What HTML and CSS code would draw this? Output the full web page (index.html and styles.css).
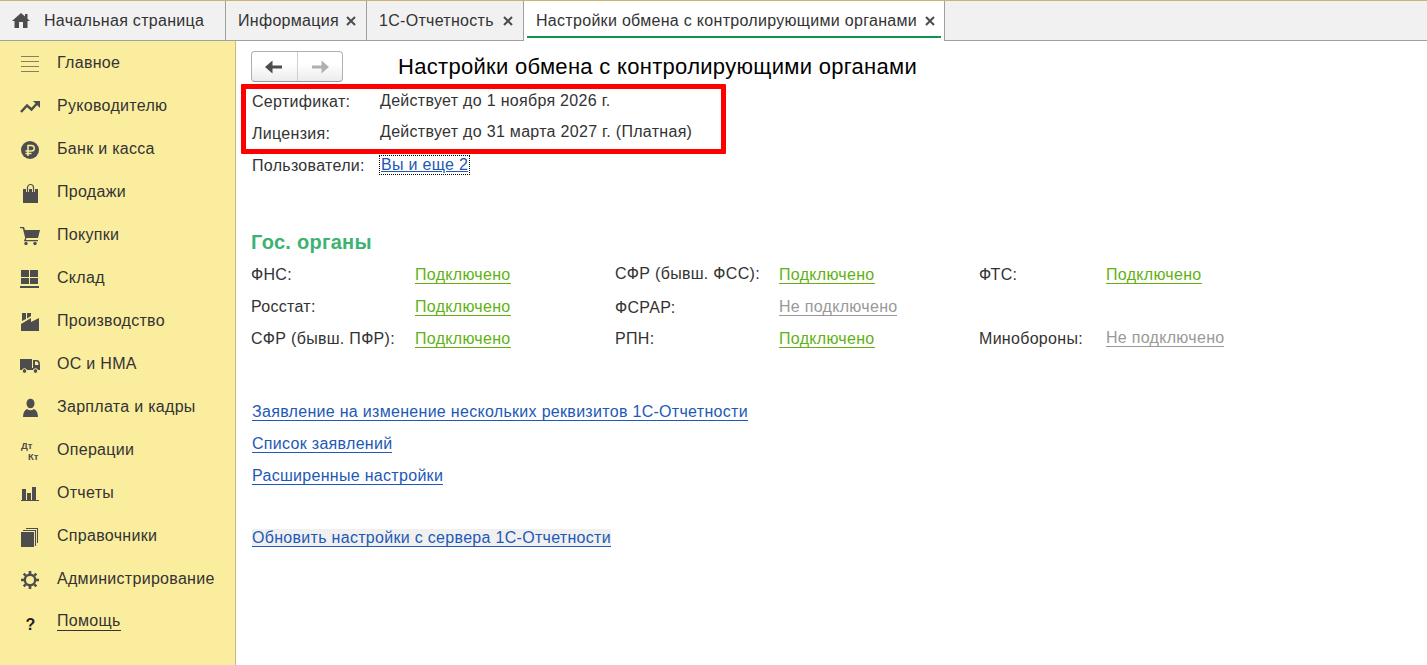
FILE: index.html
```html
<!DOCTYPE html>
<html lang="ru">
<head>
    <meta charset="UTF-8">
    <meta name="viewport" content="width=device-width, initial-scale=1.0">
    <title>Настройки обмена с контролирующими органами</title>
    <link rel="stylesheet" href="styles.css">
</head>
<body>
    <div class="tabs">
        <div class="tab home">
            <svg width="18" height="15" viewBox="0 0 18 15"><path d="M9 0 0 8h2.5v7H7V9h4v6h4.500V8H18l-2.500-2.300V1H13v2.500z" fill="#4d4d4d"/></svg>
            <span>Начальная страница</span>
        </div>
        <div class="tab info">
            <span>Информация</span>
            <svg class="close" width="10" height="10" viewBox="0 0 10 10"><path d="M1 1l8 8M9 1l-8 8"/></svg>
        </div>
        <div class="tab report">
            <span>1С-Отчетность</span>
            <svg class="close" width="10" height="10" viewBox="0 0 10 10"><path d="M1 1l8 8M9 1l-8 8"/></svg>
        </div>
        <div class="tab current">
            <span>Настройки обмена с контролирующими органами</span>
            <svg class="close" width="10" height="10" viewBox="0 0 10 10"><path d="M1 1l8 8M9 1l-8 8"/></svg>
        </div>
    </div>
    <div class="container">
        <div class="sidebar">
            <div class="item">
                <svg class="icon" viewBox="0 0 20 20"><path d="M1 2.500h18M1 7.500h18M1 12.500h18M1 17.500h18" stroke="#85805f" stroke-width="1.200"/></svg>
                <span>Главное</span>
            </div>
            <div class="item">
                <svg class="icon" viewBox="0 0 20 20"><path d="M1 15l6-6.500 4.500 4L17 6.500" fill="none" stroke="#4d4d4d" stroke-width="2.500"/><path d="M13 4h7v7z" fill="#4d4d4d"/></svg>
                <span>Руководителю</span>
            </div>
            <div class="item">
                <svg class="icon" viewBox="0 0 20 20"><circle cx="10" cy="10" r="9" fill="#4d4d4d"/><path d="M8 16V5.500h3.500a2.700 2.700 0 0 1 0 5.500H5.500M5.500 13.500h6" fill="none" stroke="#fbed9e" stroke-width="1.500"/></svg>
                <span>Банк и касса</span>
            </div>
            <div class="item">
                <svg class="icon" viewBox="0 0 20 20"><path d="M3 6h15v14H3z" fill="#4d4d4d"/><path d="M7.500 9V4.500a3 3 0 0 1 6 0V9" fill="none" stroke="#fbed9e" stroke-width="3"/><path d="M7.500 9V4.500a3 3 0 0 1 6 0V9" fill="none" stroke="#4d4d4d" stroke-width="1.200"/></svg>
                <span>Продажи</span>
            </div>
            <div class="item">
                <svg class="icon" viewBox="0 0 20 20"><path d="M0 1h4l1 3h15l-2 8H6.500l-.8 2H18v1.300H3.800l1.400-3.300L2.800 2.300H0z" fill="#4d4d4d"/><circle cx="6" cy="17.500" r="1.700" fill="#4d4d4d"/><circle cx="15" cy="17.500" r="1.700" fill="#4d4d4d"/></svg>
                <span>Покупки</span>
            </div>
            <div class="item">
                <svg class="icon" viewBox="0 0 20 20"><path d="M1 1h8v7H1zM10 1h8v7h-8zM1 9h8v6H1zM10 9h8v6h-8zM0 17h19v2H0z" fill="#4d4d4d"/></svg>
                <span>Склад</span>
            </div>
            <div class="item">
                <svg class="icon" viewBox="0 0 20 20"><path d="M1 19v-7l10-6v4l8-4v13zM2 1h4v6L2 9zM7 1h4v3L7 6.500z" fill="#4d4d4d"/></svg>
                <span>Производство</span>
            </div>
            <div class="item">
                <svg class="icon" viewBox="0 0 20 20"><path d="M0 4h12v11H0zM13 5h4q3 0 3 5v5h-7z" fill="#4d4d4d"/><path d="M12 13h2v2h-2z" fill="#4d4d4d"/><path d="M15 6.500h1.500q1.800 0 2 3.500H15z" fill="#fbed9e"/><circle cx="4.500" cy="16" r="2.300" fill="#4d4d4d" stroke="#fbed9e"/><circle cx="15.500" cy="16" r="2.300" fill="#4d4d4d" stroke="#fbed9e"/></svg>
                <span>ОС и НМА</span>
            </div>
            <div class="item">
                <svg class="icon" viewBox="0 0 20 20"><ellipse cx="10.500" cy="5.500" rx="4" ry="4.800" fill="#4d4d4d"/><path d="M3 19q0-6 4-8 3.500 2.500 7 0 4 2 4 8z" fill="#4d4d4d"/></svg>
                <span>Зарплата и кадры</span>
            </div>
            <div class="item">
                <svg class="icon" viewBox="0 0 20 20"><text class="dtkt" x="1" y="8">Дт</text><text class="dtkt" x="8" y="19">Кт</text></svg>
                <span>Операции</span>
            </div>
            <div class="item">
                <svg class="icon" viewBox="0 0 20 20"><path d="M2 5h4v11h1V9h4v7h1V3h4v13h3v1H1v-1h1z" fill="#4d4d4d"/></svg>
                <span>Отчеты</span>
            </div>
            <div class="item">
                <svg class="icon" viewBox="0 0 20 20"><path d="M1 5h13v15H1z" fill="#4d4d4d"/><path d="M3 3.500h12.500V19M6 1.500h11.500V16" fill="none" stroke="#4d4d4d" stroke-width="1.100"/></svg>
                <span>Справочники</span>
            </div>
            <div class="item">
                <svg class="icon" viewBox="0 0 20 20"><circle cx="10" cy="10" r="5.200" fill="none" stroke="#4d4d4d" stroke-width="2.400"/><path d="M10 1v3M10 16v3M1 10h3M16 10h3M3.700 3.700l2 2M14.300 14.300l2 2M3.700 16.300l2-2M14.300 5.700l2-2" stroke="#4d4d4d" stroke-width="2.600"/></svg>
                <span>Администрирование</span>
            </div>
            <div class="item">
                <svg class="icon" viewBox="0 0 20 20"><text class="question" x="5.500" y="17">?</text></svg>
                <a class="help" href="#">Помощь</a>
            </div>
        </div>
        <div class="content">
            <div class="header">
                <div class="nav">
                    <button><svg width="18" height="14" viewBox="0 0 18 14"><path d="M0 7l7.500-6.500v5H17v3H7.500v5z" fill="#4d4d4d"/></svg></button>
                    <button><svg width="18" height="14" viewBox="0 0 18 14"><path d="M18 7l-7.500-6.500v5H1v3h9.500v5z" fill="#b0b0b0"/></svg></button>
                </div>
                <h1>Настройки обмена с контролирующими органами</h1>
            </div>
            <div class="info-list">
                <div class="frame"></div>
                <div class="label">Сертификат:</div>
                <div class="value up">Действует до 1 ноября 2026 г.</div>
                <div class="label">Лицензия:</div>
                <div class="value up2">Действует до 31 марта 2027 г. (Платная)</div>
                <div class="label">Пользователи:</div>
                <div class="up"><a class="users" href="#">Вы и еще 2</a></div>
            </div>
            <h2>Гос. органы</h2>
            <div class="organs">
                <div>ФНС:</div>
                <div><a class="on" href="#">Подключено</a></div>
                <div class="up">СФР (бывш. ФСС):</div>
                <div><a class="on" href="#">Подключено</a></div>
                <div>ФТС:</div>
                <div><a class="on" href="#">Подключено</a></div>

                <div>Росстат:</div>
                <div><a class="on" href="#">Подключено</a></div>
                <div class="down">ФСРАР:</div>
                <div><a class="off" href="#">Не подключено</a></div>
                <div></div>
                <div></div>

                <div>СФР (бывш. ПФР):</div>
                <div><a class="on" href="#">Подключено</a></div>
                <div>РПН:</div>
                <div><a class="on" href="#">Подключено</a></div>
                <div>Минобороны:</div>
                <div class="up"><a class="off" href="#">Не подключено</a></div>
            </div>
            <div class="links">
                <a href="#">Заявление на изменение нескольких реквизитов 1С-Отчетности</a>
                <a href="#">Список заявлений</a>
                <a href="#">Расширенные настройки</a>
                <a class="refresh" href="#">Обновить настройки с сервера 1С-Отчетности</a>
            </div>
        </div>
    </div>
</body>
</html>
```
FILE: styles.css
```css
* {
    box-sizing: border-box;
}
body {
    margin: 0;
    height: 665px;
    overflow: hidden;
    display: flex;
    flex-direction: column;
    background: white;
    color: #333;
    font-family: "Liberation Sans", Arial, sans-serif;
    font-size: 16px;
    line-height: 20px;
    letter-spacing: 0.3px;
    white-space: nowrap;
}
svg {
    display: block;
    flex: none;
}
.tabs {
    display: flex;
    height: 41px;
    flex: none;
    background: #f1f1f1;
    border-top: 1px solid #c9b56b;
    border-bottom: 1px solid #a0a0a0;
}
.tab {
    display: flex;
    align-items: center;
    justify-content: space-between;
    border-right: 1px solid #a0a0a0;
    padding: 0 10px 0 12px;
}
.home {
    width: 226px;
    justify-content: flex-start;
    gap: 14px;
}
.info {
    width: 141px;
}
.report {
    width: 157px;
}
.current {
    width: 421px;
    height: 40px;
    padding-right: 9px;
    background: linear-gradient(#0e9650, #0e9650) 3px 35px / 414px 2px no-repeat white;
}
.close path {
    stroke: #4d4d4d;
    stroke-width: 2;
}
.container {
    display: flex;
    flex: 1;
}
.sidebar {
    width: 236px;
    background: #fbed9e;
    border-right: 1px solid #c5ba80;
}
.item {
    display: flex;
    align-items: center;
    height: 43px;
    gap: 17px;
    padding-left: 20px;
}
.icon {
    width: 20px;
    height: 20px;
    margin-top: 2px;
}
.dtkt {
    font-size: 9.5px;
    font-weight: bold;
    letter-spacing: 0;
    fill: #4d4d4d;
}
.question {
    font-size: 16px;
    font-weight: bold;
    fill: #222;
}
.help {
    color: #333;
    text-decoration: none;
    line-height: 18px;
    border-bottom: 1px solid #333;
}
.content {
    flex: 1;
    padding: 10px 0 0 15px;
}
.header {
    display: flex;
    align-items: center;
    gap: 55px;
    height: 31px;
}
.nav {
    display: flex;
    width: 92px;
    height: 31px;
    border: 1px solid #b0b0b0;
    border-bottom-color: #999;
    border-radius: 4px;
    background: linear-gradient(#fff 40%, #ececec);
}
.nav button {
    flex: 1;
    display: flex;
    align-items: center;
    justify-content: center;
    padding: 0;
    border: none;
    background: none;
}
.nav button + button {
    border-left: 1px solid #d0d0d0;
}
h1 {
    margin: 0;
    font-size: 22px;
    font-weight: normal;
    color: black;
}
.info-list {
    position: relative;
    display: grid;
    grid-template-columns: 128px auto;
    grid-auto-rows: 32px;
    align-items: center;
    justify-content: start;
    padding: 4px 0 0 1px;
}
.frame {
    position: absolute;
    left: -10px;
    top: 2px;
    width: 485px;
    height: 70px;
    border: 5px solid #fe0000;
    border-radius: 1px;
}
.up {
    margin-top: -2px;
}
.up2 {
    margin-top: -4px;
}
.down {
    margin-top: 2px;
}
.users {
    display: inline-block;
    line-height: 18px;
    padding: 0 1px;
    color: #1d59b5;
    outline: 1px dotted black;
}
h2 {
    margin: 48px 0 0;
    font-size: 20px;
    line-height: 24px;
    color: #3cb371;
}
.organs {
    display: grid;
    grid-template-columns: 164px 200px 164px 200px 127px 150px;
    grid-auto-rows: 32px;
    align-items: center;
    margin-top: 5px;
}
a.on,
a.off,
.links a {
    display: inline-block;
    line-height: 17px;
    text-decoration: none;
    border-bottom: 1px solid;
}
.on {
    color: #62b112;
}
.off {
    color: #999;
}
.links {
    display: flex;
    flex-direction: column;
    align-items: flex-start;
    gap: 14px;
    margin-top: 48px;
    padding-left: 1px;
    color: #1d59b5;
}
.links a {
    color: #1d59b5;
}
.links .refresh {
    margin-top: 30px;
    background: #f0f0f0;
}
```
